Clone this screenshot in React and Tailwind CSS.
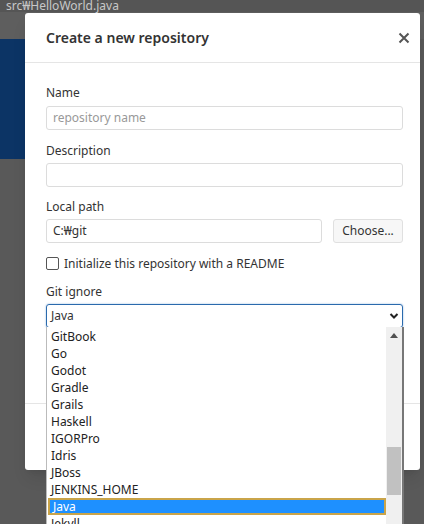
import React from "react";

const items = ["GitBook","Go","Godot","Gradle","Grails","Haskell","IGORPro","Idris","JBoss","JENKINS_HOME","Java","Jekyll"];

export default function App() {
  return (
    <div className="relative w-[424px] h-[524px] overflow-hidden bg-[#595959]" style={{fontFamily: '"Noto Sans","Noto Sans CJK KR",sans-serif'}}>
      {/* background app */}
      <div className="h-[13px] bg-[#555555] text-[#c8c8c8] text-[12px] leading-[13px] pl-[6px] -mt-[1px]">src₩HelloWorld.java</div>
      <div className="h-[27px] bg-[#5e5e5e]" />
      <div className="h-[120px] w-[25px] bg-[#0c3465]" />

      {/* modal */}
      <div className="absolute left-[25px] top-[13px] w-[395px] h-[457px] bg-white rounded-[3px] shadow-lg">
        <div className="h-[50px] border-b border-[#e5e5e5] flex items-center justify-between pl-[21px] pr-[10px]">
          <div className="text-[14px] font-semibold text-[#333]">Create a new repository</div>
          <svg width="12" height="12" viewBox="0 0 12 12"><path d="M1.5 1.5L10.5 10.5M10.5 1.5L1.5 10.5" stroke="#555" strokeWidth="2" /></svg>
        </div>
        <div className="pl-[21px] pr-[17px] pt-[21px] text-[12px] text-[#333]">
          <div className="leading-[17px]">Name</div>
          <div className="mt-[5px] h-[24px] border border-[#dcdcdc] rounded-[3px] flex items-center px-[6px] text-[#999]">repository name</div>
          <div className="mt-[12px] leading-[17px]">Description</div>
          <div className="mt-[4px] h-[24px] border border-[#dcdcdc] rounded-[3px]" />
          <div className="mt-[11px] leading-[17px]">Local path</div>
          <div className="mt-[4px] flex gap-[11px]">
            <div className="flex-1 h-[24px] border border-[#dcdcdc] rounded-[3px] flex items-center px-[6px]">C:₩git</div>
            <div className="w-[70px] h-[24px] border border-[#e0e0e0] bg-[#f7f7f7] rounded-[3px] flex items-center justify-center">Choose...</div>
          </div>
          <div className="mt-[12px] flex items-center gap-[5px] h-[17px]">
            <div className="w-[13px] h-[13px] border border-[#555] rounded-[2px] bg-white" />
            <div>Initialize this repository with a README</div>
          </div>
          <div className="mt-[11px] leading-[17px]">Git ignore</div>
          <div className="mt-[4px] h-[24px] border border-[#2b6aad] rounded-[3px] flex items-center justify-between pl-[4px] pr-[3px] shadow-[0_0_2px_#8fb6de]">
            <span>Java</span>
            <svg width="10" height="8" viewBox="0 0 10 8"><path d="M1.5 2L5 5.5L8.5 2" stroke="#222" strokeWidth="2" fill="none" /></svg>
          </div>
        </div>
        <div className="absolute left-0 right-0 top-[390px] border-t border-[#e5e5e5]" />
      </div>

      {/* dropdown */}
      <div className="absolute left-[46px] top-[327px] w-[358px] h-[200px] bg-white border-l border-[#bbbbbb] border-r-2 border-r-[#777] flex text-[12px] text-[#222]">
        <div className="flex-1 pt-[1px]">
          {items.map((it) => (
            <div key={it} className={it === "Java" ? "h-[17px] leading-[13px] pl-[3px] bg-[#1e90ff] text-white border-2 border-[#c9a44a] ml-[1px]" : "h-[17px] leading-[17px] pl-[4px]"}>{it}</div>
          ))}
        </div>
        <div className="w-[16px] bg-[#f0f0f0] relative">
          <svg className="absolute left-[4px] top-[6px]" width="8" height="5" viewBox="0 0 8 5"><path d="M0 5L4 0L8 5Z" fill="#505050" /></svg>
          <div className="absolute left-[1px] right-[1px] top-[120px] h-[48px] bg-[#c1c1c1]" />
        </div>
      </div>
    </div>
  );
}
